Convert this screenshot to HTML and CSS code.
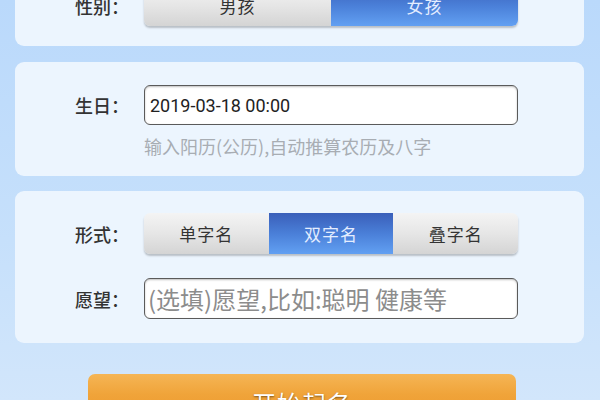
FILE: index.html
```html
<!DOCTYPE html>
<html lang="zh">
<head>
<meta charset="utf-8">
<link rel="stylesheet" href="styles.css">
</head>
<body>
<div class="page">
  <section class="card card-first">
    <div class="row">
      <div class="label">性别：</div>
      <div class="seg">
        <div class="seg-item">男孩</div>
        <div class="seg-item active">女孩</div>
      </div>
    </div>
  </section>

  <section class="card card-birth">
    <div class="row">
      <div class="label">生日：</div>
      <input class="field date" type="text" value="2019-03-18 00:00">
    </div>
    <div class="hint">输入阳历(公历),自动推算农历及八字</div>
  </section>

  <section class="card card-form">
    <div class="row">
      <div class="label">形式：</div>
      <div class="seg">
        <div class="seg-item">单字名</div>
        <div class="seg-item active">双字名</div>
        <div class="seg-item">叠字名</div>
      </div>
    </div>
    <div class="row row-wish">
      <div class="label">愿望：</div>
      <input class="field wish" type="text" placeholder="(选填)愿望,比如:聪明 健康等">
    </div>
  </section>

  <div class="btn-wrap">
    <button class="start">开始起名</button>
  </div>
</div>
</body>
</html>
```

FILE: styles.css
```css
html, body {
  margin: 0;
  padding: 0;
}
body {
  width: 600px;
  height: 400px;
  overflow: hidden;
  background: linear-gradient(to bottom, #bad9fb 0%, #c6e0fb 60%, #d2e6fb 100%);
  font-family: "Noto Sans CJK SC", "Noto Sans", sans-serif;
  color: #333;
}
.page {
  margin-top: -37px;
  padding: 0 16px 0 15px;
  display: flex;
  flex-direction: column;
  gap: 16px;
}
.card {
  background: #ecf5fe;
  border-radius: 9px;
  padding: 22px 66px 20px 60px;
  display: flex;
  flex-direction: column;
}
.card-birth {
  padding-top: 23px;
  padding-bottom: 18px;
}
.card-form {
  margin-top: -1px;
  padding-bottom: 24px;
  gap: 24px;
}
.row {
  display: flex;
  align-items: center;
}
.label {
  width: 69px;
  flex: none;
  font-size: 18px;
  font-weight: 500;
  color: #333;
}
.seg {
  flex: 1;
  display: flex;
  height: 41px;
  border-radius: 6px;
  overflow: hidden;
  box-shadow: 0 2px 2px rgba(0, 0, 0, 0.22);
}
.seg-item {
  flex: 1;
  display: flex;
  align-items: center;
  justify-content: center;
  font-size: 17px;
  color: #333;
  background: linear-gradient(to bottom, #f4f4f4 0%, #e6e6e6 50%, #d4d4d4 100%);
  letter-spacing: 1px;
}
.seg-item.active {
  background: linear-gradient(to bottom, #3a5fb9 0%, #4a7fd8 50%, #62a0f2 100%);
  color: #e4edff;
}
.field {
  flex: 1;
  min-width: 0;
  box-sizing: border-box;
  height: 40px;
  margin: 0;
  border: 1px solid #5a5a5a;
  border-radius: 6px;
  background: #fff;
  box-shadow: inset 0 1px 2px rgba(0, 0, 0, 0.25);
  outline: none;
  padding: 0 5px;
  color: #222;
}
.date {
  font-family: "Roboto", "Noto Sans CJK SC", sans-serif;
  font-size: 18px;
}
.wish {
  height: 41px;
  padding: 0 3px;
  font-family: "Noto Sans CJK SC", sans-serif;
  font-size: 24px;
}
.wish::placeholder {
  color: #8c8c8c;
}
.hint {
  margin-left: 69px;
  margin-top: 10px;
  font-size: 18px;
  color: #a8adb3;
  line-height: 23px;
}
.btn-wrap {
  margin-top: 15px;
  padding: 0 68px 0 73px;
}
.start {
  display: block;
  width: 100%;
  height: 50px;
  border: none;
  border-radius: 7px;
  background: linear-gradient(to bottom, #f5b555 0%, #f0a43a 40%, #ec9628 100%);
  color: #fff;
  font-family: "Noto Sans CJK SC", sans-serif;
  font-size: 24px;
  letter-spacing: 1px;
  text-shadow: 0 1px 2px rgba(0, 0, 0, 0.5);
  padding: 6px 0 0;
}
```
